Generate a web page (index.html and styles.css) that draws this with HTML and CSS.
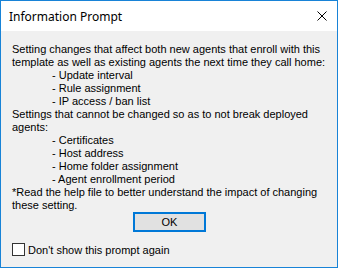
FILE: index.html
```html
<!DOCTYPE html>
<html lang="en">
<head>
    <meta charset="UTF-8">
    <title>Information Prompt</title>
    <link rel="stylesheet" href="styles.css">
</head>
<body>
    <div class="window">
        <div class="titlebar">
            <span class="title">Information Prompt</span>
            <div class="close">
                <svg viewBox="0 0 10 10" width="10" height="10">
                    <path d="M0.5 0.5L9.5 9.5M9.5 0.5L0.5 9.5" stroke="#000" stroke-width="1" fill="none"></path>
                </svg>
            </div>
        </div>

        <div class="content">
            <div class="message">
                <p>Setting changes that affect both new agents that enroll with this template as well as existing agents the next time they call home:</p>
                <p class="item">- Update interval</p>
                <p class="item">- Rule assignment</p>
                <p class="item">- IP access / ban list</p>
                <p>Settings that cannot be changed so as to not break deployed agents:</p>
                <p class="item">- Certificates</p>
                <p class="item">- Host address</p>
                <p class="item">- Home folder assignment</p>
                <p class="item">- Agent enrollment period</p>
                <p>*Read the help file to better understand the impact of changing these setting.</p>
            </div>

            <div class="actions">
                <button class="btn">OK</button>
            </div>

            <label class="check">
                <span class="box"></span>
                Don't show this prompt again
            </label>
        </div>
    </div>
</body>
</html>
```

FILE: styles.css
```css
* {
    margin: 0;
    padding: 0;
    box-sizing: border-box;
}

body {
    background: #f0f0f0;
    color: #000;
    font-family: "Liberation Sans", Arial, sans-serif;
    font-size: 11px;
}

.window {
    width: 338px;
    height: 268px;
    border: 1px solid #1883d7;
    background: #f0f0f0;
    display: flex;
    flex-direction: column;
}

.titlebar {
    height: 30px;
    background: #fff;
    display: flex;
    align-items: center;
    justify-content: space-between;
    padding: 0 10px 0 8px;
}

.title {
    font-family: "Noto Sans", sans-serif;
    font-size: 12px;
}

.close {
    width: 10px;
    height: 10px;
    display: flex;
}

.content {
    flex: 1;
    padding: 12px 11px 0 11px;
    display: flex;
    flex-direction: column;
}

.message {
    line-height: 13px;
}

.message .item {
    padding-left: 40px;
}

.actions {
    display: flex;
    justify-content: center;
    padding-left: 1px;
}

.btn {
    width: 73px;
    height: 20px;
    border: 2px solid #0078d7;
    background: #e1e1e1;
    font-family: "Liberation Sans", Arial, sans-serif;
    font-size: 11px;
    color: #000;
}

.check {
    display: flex;
    align-items: center;
    gap: 3px;
    margin-top: 11px;
    height: 13px;
}

.check .box {
    width: 13px;
    height: 13px;
    border: 1px solid #333;
    background: #fff;
}
```
